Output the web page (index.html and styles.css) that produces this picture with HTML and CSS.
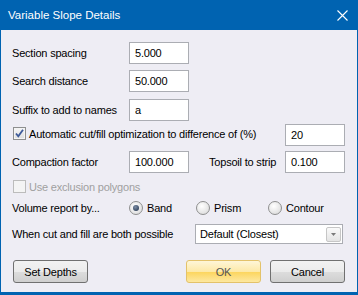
FILE: index.html
```html
<!DOCTYPE html>
<html lang="en">
<head>
  <meta charset="UTF-8">
  <title>Variable Slope Details</title>
  <link rel="stylesheet" href="styles.css">
</head>
<body>

  <div class="window">
    <div class="titlebar">
      <span class="title">Variable Slope Details</span>
      <svg class="close" width="11" height="11" viewBox="0 0 11 11">
        <path d="M0.5 0.5L10.5 10.5M10.5 0.5L0.5 10.5" stroke="#fff" stroke-width="1.1"/>
      </svg>
    </div>

    <div class="content">
      <div class="row r1">
        <label class="lbl">Section spacing</label>
        <input class="field" type="text" value="5.000">
      </div>

      <div class="row r2">
        <label class="lbl">Search distance</label>
        <input class="field" type="text" value="50.000">
      </div>

      <div class="row r3">
        <label class="lbl">Suffix to add to names</label>
        <input class="field" type="text" value="a">
      </div>

      <div class="row r4">
        <span class="check checked">
          <svg width="11" height="11" viewBox="0 0 11 11">
            <path d="M2 5.5L4.3 8.3L9 1.8" fill="none" stroke="#3d5a99" stroke-width="1.8"/>
          </svg>
        </span>
        <span class="check-text">Automatic cut/fill optimization to difference of (%)</span>
        <input class="field push" type="text" value="20">
      </div>

      <div class="row r5">
        <label class="lbl">Compaction factor</label>
        <input class="field" type="text" value="100.000">
        <label class="lbl-right">Topsoil to strip</label>
        <input class="field push" type="text" value="0.100">
      </div>

      <div class="row r6 disabled">
        <span class="check"></span>
        <span class="check-text">Use exclusion polygons</span>
      </div>

      <div class="row r7">
        <label class="lbl">Volume report by...</label>
        <span class="option opt-band"><span class="radio on"></span>Band</span>
        <span class="option opt-prism"><span class="radio"></span>Prism</span>
        <span class="option"><span class="radio"></span>Contour</span>
      </div>

      <div class="row r8">
        <label class="lbl-wide">When cut and fill are both possible</label>
        <div class="combo">
          <span class="combo-text">Default (Closest)</span>
          <span class="drop">
            <svg width="5" height="3" viewBox="0 0 5 3"><path d="M0 0H5L2.5 3Z" fill="#7a7a7a"/></svg>
          </span>
        </div>
      </div>

      <div class="row buttons">
        <button class="btn">Set Depths</button>
        <button class="btn ok">OK</button>
        <button class="btn cancel">Cancel</button>
      </div>
    </div>
  </div>

</body>
</html>
```

FILE: styles.css
```css
body {
  margin: 0;
  font-family: "Liberation Sans", Arial, sans-serif;
  font-size: 11px;
  letter-spacing: -0.2px;
  color: #000;
}

.window {
  width: 358px;
  height: 295px;
  box-sizing: border-box;
  background: #eeedf4;
  border: 1px solid #0063b1;
  border-top: none;
  border-bottom-width: 3px;
}

.titlebar {
  height: 30px;
  background: #0063b1;
  color: white;
  display: flex;
  align-items: center;
  justify-content: space-between;
  padding: 0 10px 0 8px;
  margin: 0 -1px;
}
.title {
  font-size: 11.5px;
  letter-spacing: 0;
  margin-top: -1px;
}
.close {
  display: block;
}

.content {
  padding: 0 12px 0 11px;
}

.row {
  display: flex;
  align-items: center;
  height: 22px;
}
.r1 { margin-top: 12px; }
.r2 { margin-top: 6px; }
.r3 { margin-top: 7px; }
.r4 { margin-top: 3px; }
.r5 { margin-top: 5px; }
.r6 { margin-top: 4px; height: 19px; }
.r7 { margin-top: 2px; height: 20px; }
.r8 { margin-top: 6px; height: 20px; }
.buttons { margin-top: 16px; height: 23px; }

.lbl {
  width: 117px;
  flex: none;
}
.lbl-right {
  margin-left: 20px;
}
.lbl-wide {
  flex: none;
}

.field {
  width: 60px;
  height: 22px;
  box-sizing: border-box;
  border: 1px solid #abadb3;
  background: white;
  font: inherit;
  letter-spacing: inherit;
  color: #000;
  padding: 0 5px;
  margin: 0;
  outline: none;
}
.push {
  margin-left: auto;
}

/* checkboxes */
.check {
  width: 13px;
  height: 13px;
  box-sizing: border-box;
  border: 1px solid #8e8f8f;
  background: linear-gradient(#f6f6f6, #dedede);
  box-shadow: inset 0 0 0 1px #f4f4f4;
  margin-left: 1px;
  margin-top: -3px;
  display: flex;
  align-items: center;
  justify-content: center;
  flex: none;
}
.check svg {
  display: block;
}
.check-text {
  margin-left: 3px;
  margin-top: -2px;
}
.disabled {
  color: #a0a0a0;
}
.disabled .check {
  border-color: #bcbcbc;
  background: #f4f4f4;
  box-shadow: none;
  margin-top: 0;
}
.disabled .check-text {
  margin-top: 0;
}

/* radio buttons */
.option {
  display: flex;
  align-items: center;
}
.opt-band { width: 67px; }
.opt-prism { width: 72px; }
.radio {
  width: 14px;
  height: 14px;
  box-sizing: border-box;
  border-radius: 50%;
  border: 1px solid #8e8f8f;
  background: radial-gradient(circle at 40% 35%, #ffffff, #d6d6d6);
  margin-right: 4px;
  display: flex;
  align-items: center;
  justify-content: center;
}
.radio.on::after {
  content: "";
  width: 6px;
  height: 6px;
  border-radius: 50%;
  background: radial-gradient(circle at 40% 35%, #7d8ea6, #1c2e48);
}

/* combo */
.combo {
  width: 148px;
  height: 20px;
  box-sizing: border-box;
  margin-left: auto;
  margin-right: 2px;
  border: 1px solid #abadb3;
  background: white;
  display: flex;
  align-items: center;
  padding: 0 1px 0 4px;
}
.combo-text {
  flex: 1;
}
.drop {
  width: 15px;
  height: 15px;
  box-sizing: border-box;
  border: 1px solid #c6c6c6;
  border-radius: 2px;
  background: linear-gradient(#fafafa, #e4e4e4);
  display: flex;
  align-items: center;
  justify-content: center;
}
.drop svg {
  display: block;
}

/* buttons */
.btn {
  width: 75px;
  height: 23px;
  font: inherit;
  letter-spacing: inherit;
  color: #000;
  border: 1px solid #707070;
  border-radius: 3px;
  background: linear-gradient(#f2f2f2 0%, #ebebeb 50%, #dddddd 50%, #cfcfcf 100%);
  padding: 0;
  margin-left: 1px;
}
.ok {
  margin-left: auto;
  border-color: #e3c26a;
  background: linear-gradient(#fef6d8 0%, #fde9a8 50%, #fcd45a 50%, #fde8a0 100%);
  color: #555;
}
.cancel {
  margin-left: 9px;
}
```
